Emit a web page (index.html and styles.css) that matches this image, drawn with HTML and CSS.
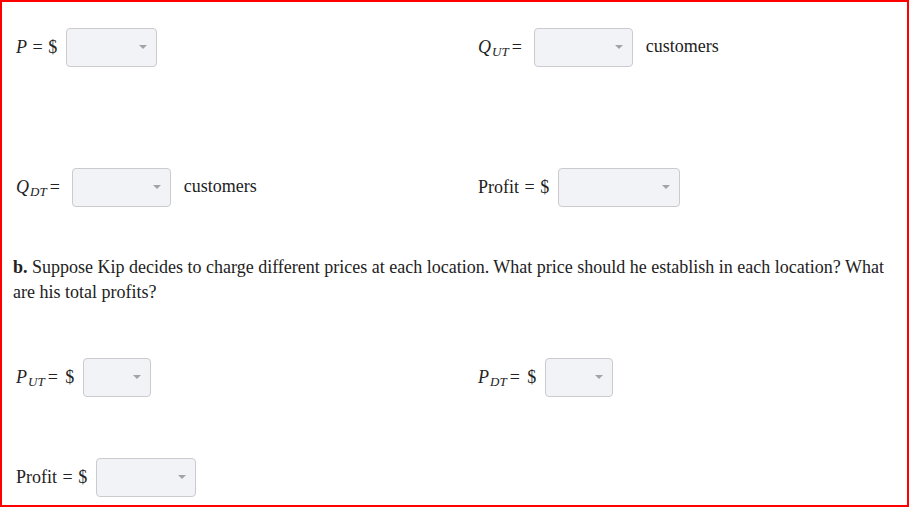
FILE: index.html
```html
<!DOCTYPE html>
<html lang="en">
<head>
    <meta charset="UTF-8">
    <title>Pricing Question</title>
    <link rel="stylesheet" href="styles.css">
</head>
<body>
    <div class="frame">

        <!-- Part a: single price -->
        <div class="row first">
            <div class="field">
                <span class="label"><i>P</i> <span class="eq">=</span> $</span>
                <span class="dropdown w91"><select><option></option></select></span>
            </div>
            <div class="field">
                <span class="label"><i>Q</i><sub>UT</sub><span class="eq sub-eq">=</span></span>
                <span class="dropdown w99"><select><option></option></select></span>
                <span class="unit">customers</span>
            </div>
        </div>

        <div class="row second">
            <div class="field">
                <span class="label"><i>Q</i><sub>DT</sub><span class="eq sub-eq">=</span></span>
                <span class="dropdown w99"><select><option></option></select></span>
                <span class="unit">customers</span>
            </div>
            <div class="field">
                <span class="label">Profit <span class="eq">=</span> $</span>
                <span class="dropdown w122"><select><option></option></select></span>
            </div>
        </div>

        <!-- Part b: different prices -->
        <p class="question"><b>b.</b> Suppose Kip decides to charge different prices at each location. What price should he establish in each location? What are his total profits?</p>

        <div class="row third">
            <div class="field">
                <span class="label"><i>P</i><sub>UT</sub><span class="eq sub-eq">=</span> $</span>
                <span class="dropdown w68"><select><option></option></select></span>
            </div>
            <div class="field">
                <span class="label"><i>P</i><sub>DT</sub><span class="eq sub-eq">=</span> $</span>
                <span class="dropdown w68"><select><option></option></select></span>
            </div>
        </div>

        <div class="row fourth">
            <div class="field">
                <span class="label">Profit <span class="eq">=</span> $</span>
                <span class="dropdown w100"><select><option></option></select></span>
            </div>
        </div>

    </div>
</body>
</html>
```

FILE: styles.css
```css
/* --- Base --- */
html, body {
    margin: 0;
    padding: 0;
}

body {
    font-family: "Liberation Serif", "Times New Roman", serif;
    font-size: 18px;
    color: #222;
    background: white;
}

.frame {
    box-sizing: border-box;
    width: 909px;
    height: 507px;
    border: 2px solid #ff0000;
    padding: 26px 11px 0 11px;
    overflow: hidden;
}

/* --- Answer rows --- */
.row {
    display: grid;
    grid-template-columns: 462px 1fr;
    padding-left: 3px;
    height: 39px;
}

.second { margin-top: 101px; }
.third  { margin-top: 53px; }
.fourth { margin-top: 61px; }

.field {
    display: flex;
    align-items: center;
    gap: 9px;
}

.label {
    white-space: nowrap;
    line-height: 20px;
    position: relative;
    top: -1px;
}

.label i {
    font-style: italic;
}

.label sub {
    font-style: italic;
    font-size: 13px;
    vertical-align: -3px;
    line-height: 0;
    margin-left: 1px;
}

.eq {
    margin: 0 1px;
}

.eq.sub-eq {
    margin: 0 3px;
}

.unit {
    margin-left: 4px;
    position: relative;
    top: -1px;
}

/* --- Dropdowns --- */
.dropdown {
    position: relative;
    display: inline-block;
    height: 39px;
}

.dropdown select {
    -webkit-appearance: none;
    appearance: none;
    box-sizing: border-box;
    width: 100%;
    height: 100%;
    background-color: #f2f3f7;
    border: 1px solid #cbcbcf;
    border-radius: 4px;
    font-family: inherit;
    font-size: 16px;
    margin: 0;
    padding: 0 8px;
}

.dropdown::after {
    content: "";
    position: absolute;
    right: 10px;
    top: 17px;
    border-left: 4px solid transparent;
    border-right: 4px solid transparent;
    border-top: 4px solid #a3a3a3;
    pointer-events: none;
}

.w68  { width: 68px; }
.w91  { width: 91px; }
.w99  { width: 99px; }
.w100 { width: 100px; }
.w122 { width: 122px; }

/* --- Question text --- */
.question {
    margin: 48px 0 0 0;
    line-height: 25px;
}

.question b {
    font-weight: bold;
}
```
